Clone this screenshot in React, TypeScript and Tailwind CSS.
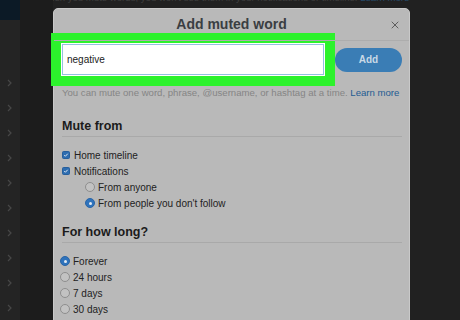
import { X } from "lucide-react";

const font = { fontFamily: '"Liberation Sans", Arial, Helvetica, sans-serif' };

function Chevron() {
  return (
    <div className="h-[25px] flex items-center pl-[7px]">
      <svg width="5" height="8" viewBox="0 0 5 8">
        <polyline points="1,1 4,4 1,7" fill="none" stroke="#474747" strokeWidth="1.2" />
      </svg>
    </div>
  );
}

function Checkbox({ label }: { label: string }) {
  return (
    <div className="h-[16px] flex items-center gap-[4px]">
      <span className="w-[8px] h-[8px] rounded-[1.5px] bg-[#2e6db0] border border-[#275f9c] flex items-center justify-center">
        <svg width="8" height="8" viewBox="0 0 8 8">
          <path d="M1.6 4.1 L3.2 5.7 L6.3 2.3" fill="none" stroke="#eef3f8" strokeWidth="1.2" />
        </svg>
      </span>
      <span className="text-[10px] text-[#222]">{label}</span>
    </div>
  );
}

function Radio({ label, checked, indent }: { label: string; checked?: boolean; indent?: boolean }) {
  return (
    <div className={`h-[16px] flex items-center gap-[3px] ${indent ? "pl-[23px]" : "-ml-[2px]"}`}>
      {checked ? (
        <span className="w-[10px] h-[10px] rounded-full bg-[#2f73bc] border border-[#2965a7] flex items-center justify-center">
          <span className="w-[3px] h-[3px] rounded-full bg-[#e3ebf2]" />
        </span>
      ) : (
        <span className="w-[10px] h-[10px] rounded-full bg-[#c2c2c2] border border-[#8e8e8e]" />
      )}
      <span className="text-[10px] text-[#222]">{label}</span>
    </div>
  );
}

function SectionTitle({ children }: { children: string }) {
  return (
    <div className="h-[18px] flex items-start border-b border-[#a9a9a9] text-[12.5px] font-bold text-[#1b1b1b] leading-[14px]">
      {children}
    </div>
  );
}

export default function App() {
  return (
    <div className="relative w-[460px] h-[320px] overflow-hidden bg-[#212121] flex" style={font}>
      {/* sidebar */}
      <div className="w-[20px] flex flex-col bg-[#242424]">
        <div className="h-[20px] bg-[#0c1a26]" />
        <div className="flex flex-col pt-[50px]">
          {Array.from({ length: 10 }).map((_, i) => (
            <Chevron key={i} />
          ))}
        </div>
      </div>
      <div className="w-[33px] bg-[#1c1c1c]" />

      {/* page behind the dialog, only its last line peeks out */}
      <div className="flex-1 flex flex-col">
        <div className="h-[4px] overflow-hidden">
          <div className="-mt-[9px] -ml-[13px] text-[9.6px] text-[#3e3e3e] whitespace-nowrap">
            When you mute words, you won't see them in your notifications or timeline.{" "}
            <span className="text-[#274a68]">Learn more</span>
          </div>
        </div>
      </div>

      {/* modal */}
      <div className="absolute left-[53px] top-[8px] w-[357px] h-[320px] bg-[#b9b9b9] rounded-t-[5px] border border-[#c9c9c9] flex flex-col">
        <div className="relative h-[32px] shrink-0 flex items-center justify-center border-b border-[#adadad]">
          <span className="text-[14px] font-bold text-[#3a3e42]">Add muted word</span>
          <X className="absolute right-[8px] top-[10px] text-[#454545]" size={12} strokeWidth={1.6} />
        </div>

        <div className="flex flex-col pl-[8px] pr-[7px] pt-[3px]">
          <div className="flex items-center gap-[11px]">
            <div className="w-[262px] h-[31px] bg-white border border-[#94c0e0] shadow-[0_0_0_1px_#ffffff,0_0_0_11px_#2cf22c] flex items-center pl-[4px] text-[10px] text-[#222]">
              negative
            </div>
            <div className="w-[67px] h-[24px] rounded-full bg-[#3a7db5] flex items-center justify-center text-[10px] font-bold text-[#c9d9e6]">
              Add
            </div>
          </div>

          <div className="mt-[11px] h-[14px] text-[9.6px] leading-[14px] text-[#858585] whitespace-nowrap">
            You can mute one word, phrase, @username, or hashtag at a time.{" "}
            <span className="text-[#1f5c92]">Learn more</span>
          </div>

          <div className="mt-[19px]">
            <SectionTitle>Mute from</SectionTitle>
          </div>
          <div className="pt-[10px] flex flex-col">
            <Checkbox label="Home timeline" />
            <Checkbox label="Notifications" />
            <Radio indent label="From anyone" />
            <Radio indent checked label="From people you don't follow" />
          </div>

          <div className="mt-[14px]">
            <SectionTitle>For how long?</SectionTitle>
          </div>
          <div className="pt-[10px] flex flex-col">
            <Radio checked label="Forever" />
            <Radio label="24 hours" />
            <Radio label="7 days" />
            <Radio label="30 days" />
          </div>
        </div>
      </div>
    </div>
  );
}
